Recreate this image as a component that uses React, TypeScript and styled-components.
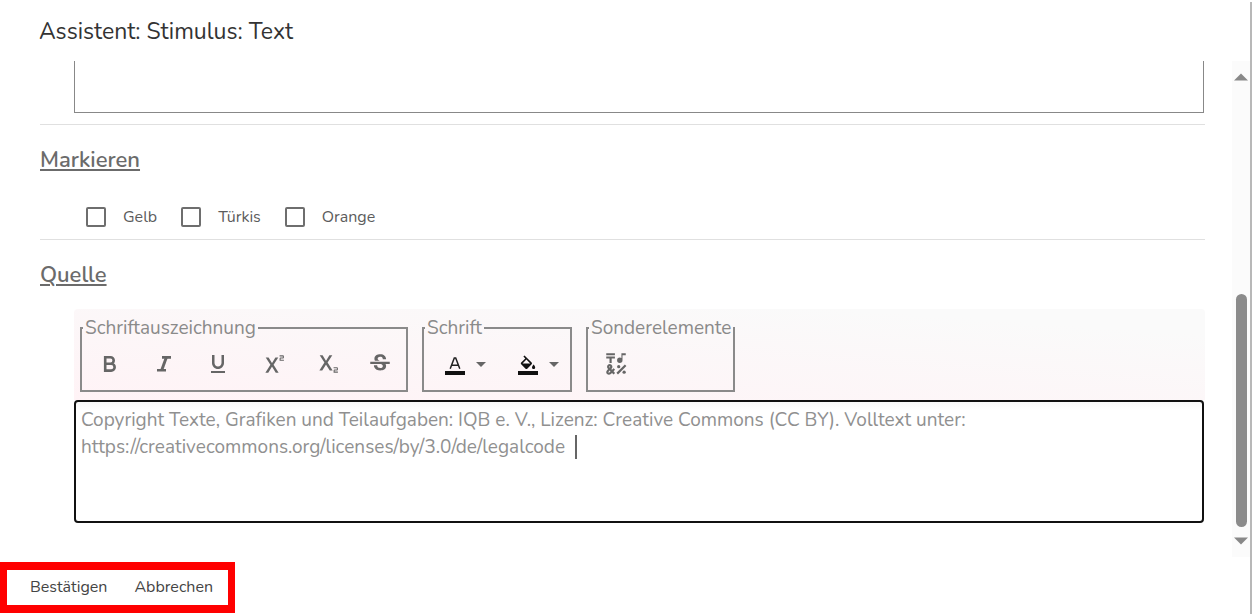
import React from 'react';
import styled, { createGlobalStyle } from 'styled-components';
import {
  MdArrowDropDown,
  MdEmojiSymbols,
  MdFormatUnderlined,
  MdStrikethroughS,
  MdSubscript,
  MdSuperscript,
} from 'react-icons/md';

const GlobalStyle = createGlobalStyle`
  * { box-sizing: border-box; }
  body {
    margin: 0;
    background: #fff;
    color: #333;
    font-family: Nunito, "Open Sans", "Noto Sans", sans-serif;
    font-size: 16px;
    line-height: 20px;
    font-variant-ligatures: none;
  }
  button, input, textarea { font: inherit; }
`;

const Page = styled.div`
  min-height: 100vh;
  padding: 2px 7px 0 0;
  display: flex;
`;

const Dialog = styled.main`
  flex: 1;
  min-width: 0;
  display: flex;
  flex-direction: column;
  border-right: 2px solid #b8b8b8;
`;

const Title = styled.h1`
  margin: 0;
  padding: 16px 39px 15px;
  font-size: 23px;
  line-height: 28px;
  font-weight: 400;
  color: #333;
`;

const Body = styled.div`
  flex: 1;
  display: flex;
`;

const Content = styled.div`
  flex: 1;
  min-width: 0;
  padding: 0 27px 33px 40px;
`;

const Section = styled.section`
  border-top: 1px solid #e0e0e0;
`;

const Heading = styled.h2`
  margin: 0;
  padding: 21px 0 20px;
  font-size: 22px;
  line-height: 28px;
  font-weight: 600;
  color: #6b6b6b;
  text-decoration: underline;
  text-decoration-thickness: 2px;
  text-underline-offset: 2px;
`;

const Indent = styled.div`
  padding-left: 34px;
`;

const PlainArea = styled.textarea`
  display: block;
  width: calc(100% - 1px);
  height: 52px;
  margin-bottom: 11px;
  border: 1px solid #888;
  border-top: 0;
  outline: 0;
  resize: none;
  background: #fff;
`;

const Checks = styled.div`
  display: flex;
  gap: 24px;
  padding: 13px 0 12px 46px;
`;

const Check = styled.label`
  display: flex;
  align-items: center;
  gap: 17px;
  color: #5c5c5c;

  input {
    appearance: none;
    width: 20px;
    height: 20px;
    margin: 0;
    border: 2px solid #6e6e6e;
    border-radius: 2px;
    background: #fff;
  }
`;

const Toolbar = styled.div`
  display: flex;
  gap: 14px;
  padding: 7px 6px 8px;
  border-radius: 4px 4px 0 0;
  background: linear-gradient(184deg, #fafafa 15%, #fff3f6 100%);
`;

const Group = styled.fieldset<{ $min?: number }>`
  margin: 0;
  padding: 0 0 2px;
  min-width: ${(p) => p.$min ?? 0}px;
  border: 2px solid #8a8a8a;

  legend {
    margin-left: 1px;
    padding: 0 2px;
    font-size: 19px;
    line-height: 24px;
    color: #8a8a8a;
  }
`;

const Tools = styled.div`
  display: flex;
`;

const Tool = styled.button<{ $split?: boolean }>`
  width: ${(p) => (p.$split ? 73 : 54)}px;
  height: 48px;
  display: flex;
  align-items: center;
  justify-content: ${(p) => (p.$split ? 'flex-end' : 'center')};
  padding: ${(p) => (p.$split ? '0 4px 0 0' : '0 0 0 1px')};
  border: 0;
  background: none;
  color: #666;
`;

const ColorGlyph = styled.svg`
  width: 24px;
  height: 24px;
  margin-right: 2px;
  fill: #111;
`;

const LineGlyph = styled.svg`
  width: 24px;
  height: 24px;
  fill: none;
  stroke: currentColor;
`;

const Editor = styled.div`
  position: relative;
  width: calc(100% - 1px);
`;

const EditorArea = styled.textarea`
  display: block;
  width: 100%;
  height: 123px;
  padding: 5px;
  border: 2px solid #111;
  border-radius: 4px;
  outline: 0;
  resize: none;
  background: linear-gradient(#f8f8f8, #fff 8px);
  font-size: 19px;
  line-height: 27px;
  color: #909090;
`;

const Caret = styled.span`
  position: absolute;
  left: 501px;
  top: 35px;
  width: 2px;
  height: 24px;
  background: #666;
`;

const ScrollTrack = styled.div`
  width: 18px;
  display: flex;
  flex-direction: column;
  align-items: center;
  padding: 12px 0;
  background: #fbfbfb;
`;

const ScrollThumb = styled.div`
  width: 11px;
  height: 233px;
  margin: auto 0 10px;
  border-radius: 6px;
  background: #8b8b8b;
`;

const Footer = styled.footer`
  display: flex;
  padding: 5px 0 1px;
`;

const Actions = styled.div`
  display: flex;
  gap: 27px;
  padding: 0 15px 0 23px;
  border: 7px solid #f00;
  border-top-width: 8px;
  border-bottom-width: 8px;
`;

const Action = styled.button`
  height: 35px;
  padding: 0 0 2px;
  border: 0;
  background: none;
  color: #444;
`;

const BoldGlyph = () => (
  <LineGlyph viewBox="0 0 24 24">
    <path
      d="M7.2 5.3h5.3a3.2 3.2 0 0 1 0 6.4H7.2zM7.2 11.7h6a3.4 3.4 0 0 1 0 6.9h-6z"
      strokeWidth="2.6"
    />
  </LineGlyph>
);

const ItalicGlyph = () => (
  <LineGlyph viewBox="0 0 24 24">
    <path d="M10 5.4h9M5 18.2h9" strokeWidth="2.6" />
    <path d="M14.3 5.4 9.7 18.2" strokeWidth="2.9" />
  </LineGlyph>
);

const markers = ['Gelb', 'Türkis', 'Orange'];

const fontTools = [
  { label: 'Fett', icon: <BoldGlyph /> },
  { label: 'Kursiv', icon: <ItalicGlyph /> },
  { label: 'Unterstrichen', icon: <MdFormatUnderlined size={24} /> },
  { label: 'Hochgestellt', icon: <MdSuperscript size={26} /> },
  { label: 'Tiefgestellt', icon: <MdSubscript size={26} /> },
  { label: 'Durchgestrichen', icon: <MdStrikethroughS size={26} /> },
];

const colorTools = [
  {
    label: 'Schriftfarbe',
    shape: (
      <path d="M7.2 16.8 11.3 6h1.4l4.1 10.8M8.7 13.2h6.6" fill="none" stroke="#222" strokeWidth="1.5" />
    ),
  },
  {
    label: 'Hintergrundfarbe',
    shape: (
      <g transform="translate(2.4 3.4) scale(0.8)">
        <path d="M16.56 8.94 7.62 0 6.21 1.41l2.38 2.38-5.15 5.15a1.49 1.49 0 0 0 0 2.12l5.5 5.5c.29.29.68.44 1.06.44s.77-.15 1.06-.44l5.5-5.5c.59-.58.59-1.53 0-2.12zM5.21 10 10 5.21 14.79 10H5.21zM19 11.5s-2 2.17-2 3.5c0 1.1.9 2 2 2s2-.9 2-2c0-1.33-2-3.5-2-3.5z" />
      </g>
    ),
  },
];

const sourceText =
  'Copyright Texte, Grafiken und Teilaufgaben: IQB e. V., Lizenz: Creative Commons (CC BY). Volltext unter:\n' +
  'https://creativecommons.org/licenses/by/3.0/de/legalcode ';

export default function App() {
  return (
    <>
      <GlobalStyle />
      <Page>
        <Dialog>
          <Title>Assistent: Stimulus: Text</Title>
          <Body>
            <Content>
              <Indent>
                <PlainArea aria-label="Text" />
              </Indent>
              <Section>
                <Heading>Markieren</Heading>
                <Checks>
                  {markers.map((name) => (
                    <Check key={name}>
                      <input type="checkbox" />
                      {name}
                    </Check>
                  ))}
                </Checks>
              </Section>
              <Section>
                <Heading>Quelle</Heading>
                <Indent>
                  <Toolbar>
                    <Group>
                      <legend>Schriftauszeichnung</legend>
                      <Tools>
                        {fontTools.map(({ label, icon }) => (
                          <Tool key={label} type="button" aria-label={label}>
                            {icon}
                          </Tool>
                        ))}
                      </Tools>
                    </Group>
                    <Group>
                      <legend>Schrift</legend>
                      <Tools>
                        {colorTools.map(({ label, shape }) => (
                          <Tool key={label} type="button" aria-label={label} $split>
                            <ColorGlyph viewBox="0 0 24 24">
                              {shape}
                              <path d="M2 19h20v4H2z" />
                            </ColorGlyph>
                            <MdArrowDropDown size={24} />
                          </Tool>
                        ))}
                      </Tools>
                    </Group>
                    <Group $min={149}>
                      <legend>Sonderelemente</legend>
                      <Tools>
                        <Tool type="button" aria-label="Sonderzeichen">
                          <MdEmojiSymbols size={26} />
                        </Tool>
                      </Tools>
                    </Group>
                  </Toolbar>
                  <Editor>
                    <EditorArea aria-label="Quelle" defaultValue={sourceText} spellCheck={false} />
                    <Caret />
                  </Editor>
                </Indent>
              </Section>
            </Content>
            <ScrollTrack aria-hidden="true">
              <svg width="14" height="8" viewBox="0 0 14 8">
                <path d="M0 7.5 7 0.5l7 7z" fill="#888" />
              </svg>
              <ScrollThumb />
              <svg width="14" height="8" viewBox="0 0 14 8">
                <path d="M0 0.5h14l-7 7z" fill="#888" />
              </svg>
            </ScrollTrack>
          </Body>
          <Footer>
            <Actions>
              <Action type="button">Bestätigen</Action>
              <Action type="button">Abbrechen</Action>
            </Actions>
          </Footer>
        </Dialog>
      </Page>
    </>
  );
}
